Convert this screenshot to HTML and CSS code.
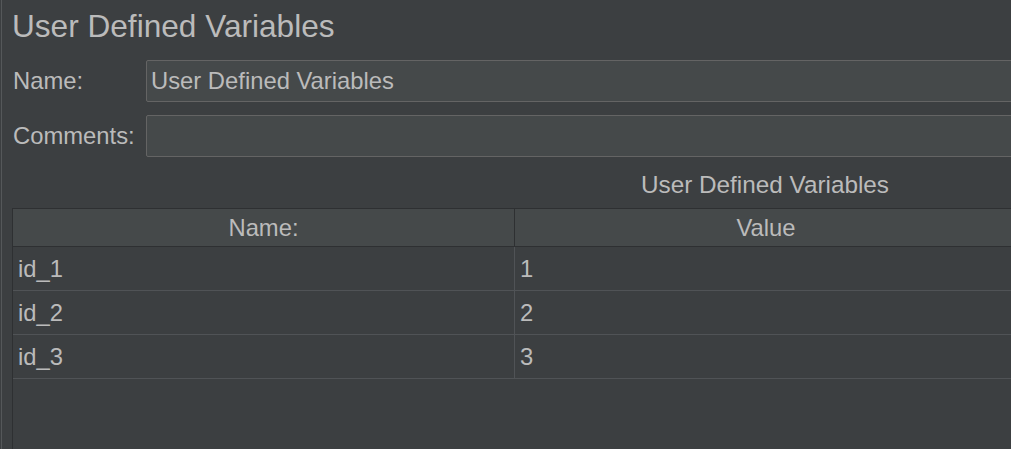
FILE: index.html
```html
<!DOCTYPE html>
<html>
<head>
<meta charset="utf-8">
<link rel="stylesheet" href="styles.css">
</head>
<body>
<div class="frame">
  <div class="panel">
    <div class="title">User Defined Variables</div>
    <div class="form">
      <div class="field">
        <label class="label">Name:</label>
        <div class="input">User Defined Variables</div>
      </div>
      <div class="field">
        <label class="label">Comments:</label>
        <div class="input"></div>
      </div>
    </div>
    <div class="caption"><span class="caption-text">User Defined Variables</span></div>
    <div class="table">
      <div class="thead">
        <div class="th">Name:</div>
        <div class="th th-last">Value</div>
      </div>
      <div class="tr">
        <div class="td">id_1</div>
        <div class="td td-last">1</div>
      </div>
      <div class="tr">
        <div class="td">id_2</div>
        <div class="td td-last">2</div>
      </div>
      <div class="tr">
        <div class="td">id_3</div>
        <div class="td td-last">3</div>
      </div>
    </div>
  </div>
</div>
</body>
</html>
```

FILE: styles.css
```css
html, body {
  margin: 0;
  padding: 0;
  background: #3c3f41;
  overflow: hidden;
  height: 100%;
}

body {
  font-family: "Liberation Sans", Arial, sans-serif;
  color: #bbbbbb;
  padding-left: 1px;
}

.frame {
  border-left: 1px solid #55585a;
  height: 100%;
  width: 1040px;
}

.panel {
  padding-left: 10px;
  display: flex;
  flex-direction: column;
  height: 100%;
}

.title {
  font-size: 31.6px;
  padding-top: 8px;
  height: 36px;
  line-height: 36px;
  white-space: nowrap;
}

.form {
  margin-top: 16px;
  display: flex;
  flex-direction: column;
  gap: 13px;
}

.field {
  display: grid;
  grid-template-columns: 134px 1fr;
  align-items: center;
  font-size: 23.8px;
}

.label {
  padding-left: 1px;
  line-height: 40px;
}

.input {
  height: 40px;
  line-height: 40px;
  background: #45494a;
  border: 1px solid #646464;
  border-radius: 2px;
  padding-left: 4px;
  white-space: nowrap;
}

.caption {
  font-size: 24.3px;
  padding-top: 14px;
  padding-bottom: 9px;
  line-height: 28px;
  padding-left: 502px;
  width: 502px;
  text-align: center;
  white-space: nowrap;
}

.table {
  flex: 1;
  width: 1004px;
  border-top: 1px solid #2e3032;
  border-left: 1px solid #2e3032;
  font-size: 23.8px;
  background: #3c3f41;
}

.thead {
  display: grid;
  grid-template-columns: 501px 1fr;
  background: #45494a;
  border-bottom: 1px solid #2e3032;
}

.th {
  height: 37px;
  line-height: 37px;
  text-align: center;
}

.th-last {
  border-left: 1px solid #2e3032;
}

.tr {
  display: grid;
  grid-template-columns: 501px 1fr;
  border-bottom: 1px solid #505356;
}

.td {
  height: 43px;
  line-height: 43px;
  padding-left: 5px;
  white-space: nowrap;
}

.td-last {
  border-left: 1px solid #505356;
  padding-left: 5px;
}
```
